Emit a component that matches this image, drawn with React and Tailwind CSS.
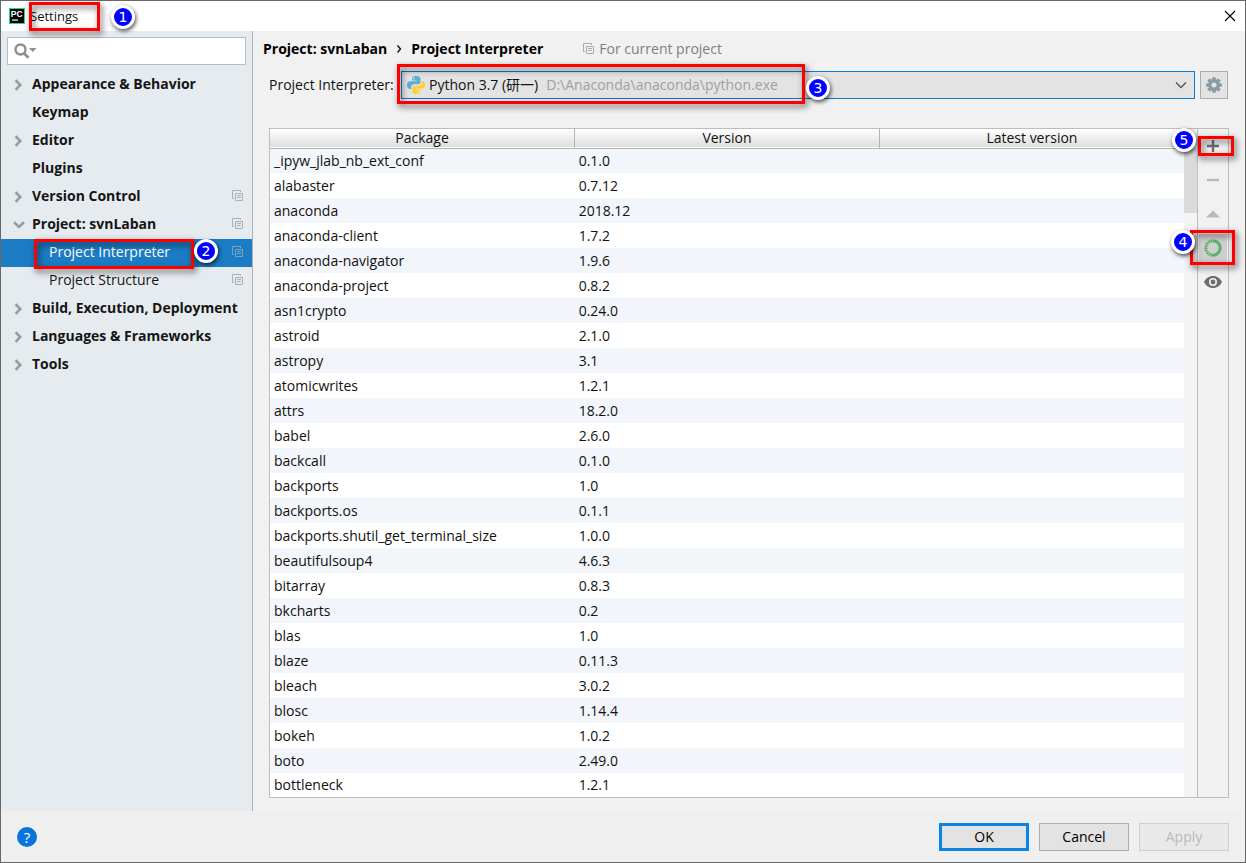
import { useState } from "react";

const packages = [
  ["_ipyw_jlab_nb_ext_conf", "0.1.0"],
  ["alabaster", "0.7.12"],
  ["anaconda", "2018.12"],
  ["anaconda-client", "1.7.2"],
  ["anaconda-navigator", "1.9.6"],
  ["anaconda-project", "0.8.2"],
  ["asn1crypto", "0.24.0"],
  ["astroid", "2.1.0"],
  ["astropy", "3.1"],
  ["atomicwrites", "1.2.1"],
  ["attrs", "18.2.0"],
  ["babel", "2.6.0"],
  ["backcall", "0.1.0"],
  ["backports", "1.0"],
  ["backports.os", "0.1.1"],
  ["backports.shutil_get_terminal_size", "1.0.0"],
  ["beautifulsoup4", "4.6.3"],
  ["bitarray", "0.8.3"],
  ["bkcharts", "0.2"],
  ["blas", "1.0"],
  ["blaze", "0.11.3"],
  ["bleach", "3.0.2"],
  ["blosc", "1.14.4"],
  ["bokeh", "1.0.2"],
  ["boto", "2.49.0"],
  ["bottleneck", "1.2.1"],
];

const tree = [
  { label: "Appearance & Behavior", arrow: "right" },
  { label: "Keymap" },
  { label: "Editor", arrow: "right" },
  { label: "Plugins" },
  { label: "Version Control", arrow: "right", scoped: true },
  { label: "Project: svnLaban", arrow: "down", scoped: true },
  { label: "Project Interpreter", child: true, scoped: true, marked: true },
  { label: "Project Structure", child: true, scoped: true },
  { label: "Build, Execution, Deployment", arrow: "right" },
  { label: "Languages & Frameworks", arrow: "right" },
  { label: "Tools", arrow: "right" },
];

function Frame({ className }) {
  return (
    <span
      aria-hidden="true"
      className={`pointer-events-none absolute z-10 border-3 border-[#fe0000] drop-shadow-[2px_3px_3px_rgba(0,0,0,0.65)] ${className}`}
    />
  );
}

function Badge({ n, className }) {
  return (
    <span
      className={`pointer-events-none absolute z-20 flex size-6 items-center justify-center rounded-full border-3 border-white bg-[#0000fe] font-['DejaVu_Sans',sans-serif] text-[14px] leading-4 font-normal text-white shadow-[1px_2px_4px_rgba(0,0,0,0.7)] ${className}`}
    >
      {n}
    </span>
  );
}

function CopyIcon({ className }) {
  return (
    <svg viewBox="0 0 12 12" className={`size-3 shrink-0 ${className}`} fill="none" stroke="currentColor" aria-hidden="true">
      <path d="M2 8.500H.5v-8h8V2" />
      <path d="M3.500 3.500h7v7h-7zM5 5.500h4M5 7.500h4" />
    </svg>
  );
}

function Arrow({ dir }) {
  return (
    <svg viewBox="0 0 12 12" className="size-3" fill="none" stroke="#999c9f" strokeWidth="2.6" aria-hidden="true">
      <path d={dir === "down" ? "M1 3.300l5 4.600 5-4.600" : "M2.600 1.200l4.600 4.800-4.600 4.800"} />
    </svg>
  );
}

function PythonIcon() {
  return (
    <svg viewBox="0 0 18 18" className="size-[18px] shrink-0" aria-hidden="true">
      <path fill="#5fadd4" fillRule="evenodd" d="M9 0C6 0 5 1 5 2.600V4.600h4.500v.7H3C1 5.300 0 7 0 9.100S1 13 2.700 13H4.300v-2.200C4.300 9.300 5.500 8.300 7 8.300h4.300c1.300 0 2.200-1 2.200-2.200V2.600C13.500 1 12 0 9 0zM6.700 1.400a.9.9 0 110 1.800.9.9 0 010-1.800z" />
      <path fill="#ffd02f" fillRule="evenodd" d="M9 18c3 0 4-1 4-2.600V13.400H8.500v-.7H15c2 0 3-1.700 3-3.800S17 5 15.300 5H14.500v2.200c0 1.500-1.200 2.500-2.700 2.500H7.500c-1.300 0-2.200 1-2.200 2.200v3.500C5.300 17 6 18 9 18zM11.300 14.800a.9.9 0 110 1.800.9.9 0 010-1.800z" />
    </svg>
  );
}

function GearIcon() {
  const teeth = [0, 45, 90, 135, 180, 225, 270, 315];
  return (
    <svg viewBox="0 0 16 16" className="size-4" aria-hidden="true">
      {teeth.map((a) => (
        <rect key={a} x="6.200" y="0.200" width="3.600" height="4" rx="0.600" fill="#8a9ba6" transform={`rotate(${a} 8 8)`} />
      ))}
      <circle cx="8" cy="8" r="4.200" fill="none" stroke="#8a9ba6" strokeWidth="3.400" />
    </svg>
  );
}

function ToolButton({ label, className = "", children }) {
  return (
    <button type="button" aria-label={label} className={`flex h-7 w-full items-center justify-center ${className}`}>
      {children}
    </button>
  );
}

export default function App() {
  const [selected, setSelected] = useState("Project Interpreter");
  return (
    <div className="flex min-h-screen flex-col border border-[#686868] bg-[#f1f1f1] font-['Open_Sans','Noto_Sans_CJK_SC',sans-serif] text-[14px] leading-5 text-[#111]">
      <header className="flex h-[30px] items-center justify-between bg-white pr-[7px] pl-2">
        <div className="flex items-center gap-[5px]">
          <svg viewBox="0 0 16 16" className="size-4" aria-hidden="true">
            <rect width="16" height="16" fill="#21d789" />
            <rect x="1" y="1" width="14" height="14" fill="#000" />
            <text x="1.800" y="8.800" fill="#fff" fontSize="8.500" fontWeight="700" fontFamily="Liberation Sans">PC</text>
            <rect x="3" y="11.500" width="6" height="1.200" fill="#fff" />
          </svg>
          <h1 className="relative text-[13px]">
            Settings
            <Frame className="-top-1 -left-px h-[29px] w-[71px]" />
            <Badge n={1} className="-top-px left-[81px]" />
          </h1>
        </div>
        <button type="button" aria-label="Close" className="flex size-4 items-center justify-center">
          <svg viewBox="0 0 12 12" className="size-3" stroke="#000" strokeWidth="1.100" aria-hidden="true">
            <path d="M1 1l10 10M11 1L1 11" />
          </svg>
        </button>
      </header>

      <div className="flex grow">
        <aside className="w-[252px] shrink-0 border-r border-[#aeb1b4] bg-[#e6ebef] pt-1.5">
          <div className="px-1.5">
            <label className="flex h-7 items-center border border-[#b9bdc0] bg-white pl-1.5">
              <svg viewBox="0 0 24 18" className="h-[18px] w-6 shrink-0" fill="none" aria-hidden="true">
                <circle cx="6.500" cy="7.500" r="5" stroke="#8e8e8e" strokeWidth="2.400" />
                <path d="M10 11.200l4.500 4.500" stroke="#8e8e8e" strokeWidth="2.800" />
                <path d="M15 6h7.500l-3.700 4z" fill="#8e8e8e" />
              </svg>
              <input type="search" aria-label="Search settings" className="w-full min-w-0 bg-transparent outline-none" />
            </label>
          </div>
          <nav aria-label="Settings" className="pt-1.5">
            <ul>
              {tree.map((item) => {
                const on = selected === item.label;
                return (
                  <li key={item.label} className="relative">
                    <button
                      type="button"
                      onClick={() => setSelected(item.label)}
                      className={`flex h-7 w-full items-center pr-2 pb-0.5 pl-3 text-left whitespace-nowrap ${on ? "bg-[#1b7cc4] text-white" : "text-[#151515]"}`}
                    >
                      <span className="w-[19px] shrink-0 pt-0.5">{item.arrow && <Arrow dir={item.arrow} />}</span>
                      <span className={`grow ${item.child ? "pl-[17px]" : "font-bold"}`}>{item.label}</span>
                      {item.scoped && <CopyIcon className={on ? "text-[#7da5c4]" : "text-[#a9b1b8]"} />}
                    </button>
                    {item.marked && (
                      <>
                        <Frame className="top-0 left-[33px] h-[30px] w-40" />
                        <Badge n={2} className="top-0 left-[193px]" />
                      </>
                    )}
                  </li>
                );
              })}
            </ul>
          </nav>
        </aside>

        <main className="flex min-w-0 grow flex-col pr-4 pb-[13px]">
          <div className="flex h-9 items-center pl-2.5">
            <h2 className="flex items-center gap-2 font-bold text-black">
              <span>Project: svnLaban</span>
              <svg viewBox="0 0 8 10" className="h-2.5 w-2" fill="none" stroke="#111" strokeWidth="1.400" aria-hidden="true">
                <path d="M2.500 1.500L5.500 5l-3 3.500" />
              </svg>
              <span>Project Interpreter</span>
            </h2>
            <p className="flex items-center gap-1 pl-10 text-[#808080]">
              <CopyIcon className="text-[#a4acb0]" />
              For current project
            </p>
          </div>

          <div className="flex items-center pt-1 pr-px pl-4">
            <label htmlFor="interpreter" className="w-[132px] shrink-0 whitespace-nowrap">Project Interpreter:</label>
            <div className="relative flex h-7 min-w-0 grow items-center border border-[#0a7bd6] bg-[#e3e3e3] pr-[7px] pl-[5px]">
              <PythonIcon />
              <select id="interpreter" className="field-sizing-content appearance-none bg-transparent pl-1 outline-none">
                <option>Python 3.7 (研一)</option>
              </select>
              <span className="grow pl-2 text-[#a0a0a0]">D:\Anaconda\anaconda\python.exe</span>
              <svg viewBox="0 0 12 8" className="h-2 w-3" fill="none" stroke="#555" strokeWidth="1.300" aria-hidden="true">
                <path d="M1 1.500l5 5 5-5" />
              </svg>
              <Frame className="-top-2 -left-[5px] h-10 w-[408px]" />
              <Badge n={3} className="top-1 left-[404px]" />
            </div>
            <button type="button" aria-label="Interpreter options" className="ml-[5px] flex size-7 shrink-0 items-center justify-center border border-[#adadad] bg-[#e3e3e3]">
              <GearIcon />
            </button>
          </div>

          <div className="mt-[29px] ml-4 flex grow border border-[#bdbdbd]">
            <div className="flex grow bg-white">
              <table className="w-full table-fixed border-collapse self-start">
                <thead>
                  <tr className="h-[19px] border-b border-[#b4b4b4] bg-linear-to-b from-white to-[#dedede]">
                    <th scope="col" className="border-r border-[#b4b4b4] p-0 leading-[18px] font-normal">Package</th>
                    <th scope="col" className="border-r border-[#b4b4b4] p-0 leading-[18px] font-normal">Version</th>
                    <th scope="col" className="p-0 leading-[18px] font-normal">Latest version</th>
                  </tr>
                </thead>
                <tbody>
                  {packages.map(([name, version]) => (
                    <tr key={name} className="h-[25px] odd:bg-[#f2f5f9] last:h-6">
                      <td className="p-0 pl-1">{name}</td>
                      <td className="p-0 pl-1">{version}</td>
                      <td className="p-0" />
                    </tr>
                  ))}
                </tbody>
              </table>
              <div className="w-[13px] shrink-0 bg-[#f3f3f3] pt-[19px]">
                <div className="h-[65px] bg-[#dadada]" />
              </div>
            </div>
            <div className="flex w-[31px] shrink-0 flex-col gap-1.5 border-l border-[#bdbdbd] pt-[3px]">
              <div className="relative">
                <ToolButton label="Install">
                  <svg viewBox="0 0 14 14" className="size-3.5" stroke="#6e6e6e" strokeWidth="2.400" aria-hidden="true">
                    <path d="M7 1v12M1 7h12" />
                  </svg>
                </ToolButton>
                <Frame className="top-1 left-0 h-5 w-9" />
                <Badge n={5} className="-top-1 -left-[26px]" />
              </div>
              <ToolButton label="Uninstall">
                <svg viewBox="0 0 14 14" className="size-3.5" stroke="#b9b9b9" strokeWidth="2.400" aria-hidden="true">
                  <path d="M1 7h12" />
                </svg>
              </ToolButton>
              <ToolButton label="Upgrade">
                <svg viewBox="0 0 14 14" className="size-3.5" fill="#b9b9b9" aria-hidden="true">
                  <path d="M0 10.500l7-7 7 7z" />
                </svg>
              </ToolButton>
              <div className="relative px-px">
                <ToolButton label="Use Conda Package Manager" className="bg-[#cfcfcf]">
                  <svg viewBox="0 0 18 18" className="size-[18px]" fill="none" stroke="#59b368" strokeWidth="3" aria-hidden="true">
                    <path d="M9 1.800a7.200 7.200 0 110 14.400" />
                    <path d="M9 16.200a7.200 7.200 0 010-14.400" strokeDasharray="1.800 0.700" />
                  </svg>
                </ToolButton>
                <Frame className="-top-1 -left-2 h-[35px] w-[45px]" />
                <Badge n={4} className="-top-1 -left-[27px]" />
              </div>
              <ToolButton label="Show early releases">
                <svg viewBox="0 0 18 12" className="h-3 w-[18px]" aria-hidden="true">
                  <path fill="#6e6e6e" fillRule="evenodd" d="M9 0C4.800 0 1.500 2.600 0 6c1.500 3.400 4.800 6 9 6s7.500-2.600 9-6c-1.500-3.400-4.800-6-9-6zm0 2a4 4 0 110 8 4 4 0 010-8z" />
                  <circle cx="9" cy="6" r="2.400" fill="#6e6e6e" />
                </svg>
              </ToolButton>
            </div>
          </div>
        </main>
      </div>

      <footer className="flex h-[51px] items-center justify-between bg-[#efefef] pr-4 pl-4">
        <button type="button" aria-label="Help" className="flex size-5 items-center justify-center rounded-full bg-[#0a74da] text-[15px] text-white">?</button>
        <div className="flex gap-2.5">
          <button type="button" className="h-7 w-[90px] border-3 border-[#0a84e0] bg-[#e3e3e3] text-black">OK</button>
          <button type="button" className="h-7 w-[90px] border border-[#adadad] bg-[#e3e3e3] text-black">Cancel</button>
          <button type="button" disabled className="h-7 w-[90px] border border-[#cfcfcf] bg-[#e9e9e9] text-[#b9b9b9]">Apply</button>
        </div>
      </footer>
    </div>
  );
}
